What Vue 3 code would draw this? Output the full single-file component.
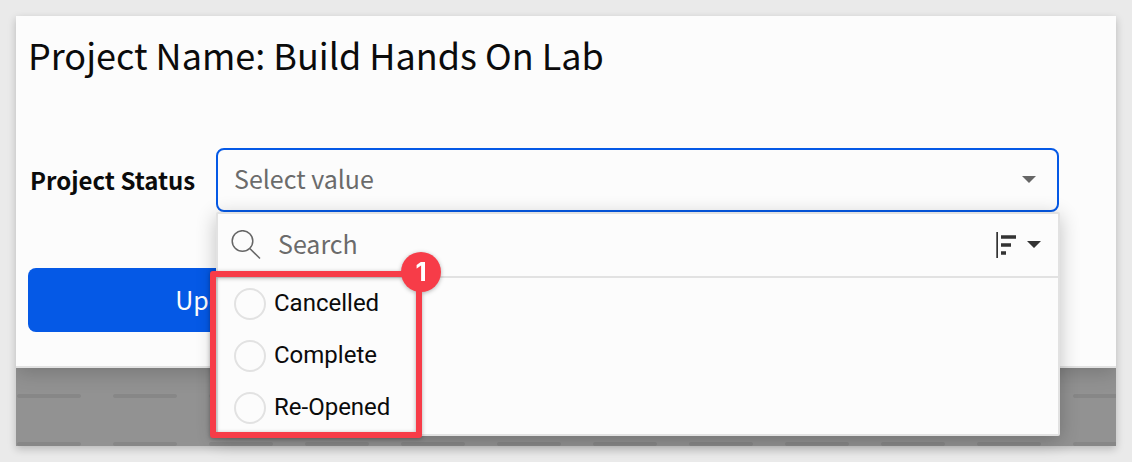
<script setup>
import { ref } from 'vue'

const statuses = ['Cancelled', 'Complete', 'Re-Opened']
const selected = ref('')
const query = ref('')
</script>

<template>
  <main class="page">
    <section class="window">
      <form class="form" @submit.prevent>
        <h1 class="title">Project Name: Build Hands On Lab</h1>

        <div class="field">
          <label class="field-label" for="status">Project Status</label>
          <div class="combo">
            <select id="status" class="select">
              <option>Select value</option>
            </select>
            <svg class="select-caret" width="14" height="7" viewBox="0 0 14 7" aria-hidden="true">
              <path d="M0 0H14L7 7Z" fill="#666" />
            </svg>

            <div class="menu">
              <div class="search">
                <svg width="30" height="30" viewBox="0 0 30 30" fill="none" stroke="#666" stroke-width="1.5" aria-hidden="true">
                  <circle cx="11.5" cy="11" r="10.3" />
                  <path d="M18.8 18.5L29 28.5" />
                </svg>
                <input v-model="query" class="search-input" type="text" placeholder="Search" aria-label="Search" />
                <button class="sort" type="button" aria-label="Sort">
                  <svg width="46" height="26" viewBox="0 0 46 26" fill="#333" aria-hidden="true">
                    <path d="M0.3 0H2V26H0.3ZM5 3.3H20V6.7H5ZM5 11.3H15V14.7H5ZM5 19.3H10V22.7H5ZM31 9H45L38 16Z" />
                  </svg>
                </button>
              </div>
              <div class="options">
                <label v-for="status in statuses" :key="status" class="option">
                  <input v-model="selected" class="radio" type="radio" name="status" :value="status" />
                  <span class="option-text">{{ status }}</span>
                </label>
              </div>
              <div class="callout">
                <span class="badge">1</span>
              </div>
            </div>
          </div>
        </div>

        <button class="submit" type="submit">Update</button>
      </form>
      <div class="backdrop">
        <svg width="100%" height="78" aria-hidden="true">
          <defs>
            <pattern id="dashes" width="96" height="48" patternUnits="userSpaceOnUse">
              <rect x="1" y="26" width="64" height="4" rx="2" fill="#878787" />
            </pattern>
          </defs>
          <rect width="100%" height="78" fill="url(#dashes)" />
        </svg>
      </div>
    </section>
  </main>
</template>

<style>
body {
  margin: 0;
  background: #eaeaea;
}
</style>

<style scoped>
.page {
  padding: 16px;
  font-family: "Noto Sans CJK SC", "Noto Sans", sans-serif;
  color: #0b0b0b;
}
.window {
  box-shadow: 0 3px 8px rgba(0, 0, 0, 0.22);
}
.form {
  position: relative;
  z-index: 1;
  padding: 16px 57px 34px 12px;
  background: #fcfcfc;
  border-bottom: 2px solid #e2e2e2;
  box-shadow: 0 4px 20px rgba(0, 0, 0, 0.2);
  clip-path: inset(0 0 -120px 0);
}
.title {
  margin: 0 0 72px;
  font-size: 36px;
  line-height: 44px;
  font-weight: 400;
}
.field {
  display: flex;
  align-items: center;
  margin-bottom: 56px;
}
.field-label {
  flex: none;
  width: 188px;
  padding: 0 0 2px 2px;
  font-size: 24px;
  font-weight: 700;
  box-sizing: border-box;
}
.combo {
  position: relative;
  flex: 1;
}
.select {
  display: block;
  width: 100%;
  height: 64px;
  padding: 0 16px 4px;
  box-sizing: border-box;
  appearance: none;
  border: 2px solid #0559e6;
  border-radius: 8px;
  background: #fcfcfc;
  font: inherit;
  font-size: 25px;
  color: #6b6b6b;
}
.select-caret {
  position: absolute;
  top: 28px;
  right: 23px;
}
.menu {
  position: absolute;
  top: 64px;
  left: 0;
  right: -1px;
  border: 2px solid #e2e2e2;
  border-radius: 2px;
  background: #fcfcfc;
  box-shadow: 0 4px 20px rgba(0, 0, 0, 0.24);
}
.search {
  display: flex;
  align-items: center;
  height: 62px;
  padding: 0 16px 0 13px;
  border-bottom: 2px solid #e2e2e2;
}
.search-input {
  flex: 1;
  min-width: 0;
  height: 44px;
  margin-left: 17px;
  padding: 0 0 4px;
  border: 0;
  outline: 0;
  background: none;
  font: inherit;
  font-size: 25px;
}
.search-input::placeholder {
  color: #6b6b6b;
  opacity: 1;
}
.sort {
  display: flex;
  padding: 0;
  border: 0;
  background: none;
}
.options {
  font-family: Roboto, sans-serif;
  font-size: 24px;
}
.option {
  display: flex;
  align-items: center;
  gap: 8px;
  height: 52px;
  padding-left: 16px;
}
.option-text {
  padding-bottom: 2px;
}
.radio {
  width: 32px;
  height: 32px;
  margin: 0;
  appearance: none;
  border: 2px solid #e2e2e2;
  border-radius: 50%;
}
.radio:checked {
  border: 10px solid #0559e6;
}
.callout {
  position: absolute;
  top: 57px;
  left: -8px;
  bottom: -4px;
  width: 212px;
  box-sizing: border-box;
  border: 6px solid #f73c48;
  border-radius: 3px;
  filter: drop-shadow(0 1px 2px rgba(0, 0, 0, 0.3));
  pointer-events: none;
}
.badge {
  position: absolute;
  top: -25px;
  right: -25px;
  width: 40px;
  height: 40px;
  border-radius: 50%;
  background: #f73c48;
  color: #fff;
  font-family: Inter, sans-serif;
  font-size: 26px;
  font-weight: 700;
  line-height: 40px;
  text-align: center;
}
.submit {
  display: block;
  width: 380px;
  height: 64px;
  padding: 0 0 2px;
  border: 0;
  border-radius: 8px;
  background: #0559e6;
  color: #fcfcfc;
  font: inherit;
  font-size: 25px;
}
.backdrop {
  background: #929292;
}
.backdrop svg {
  display: block;
}
</style>
